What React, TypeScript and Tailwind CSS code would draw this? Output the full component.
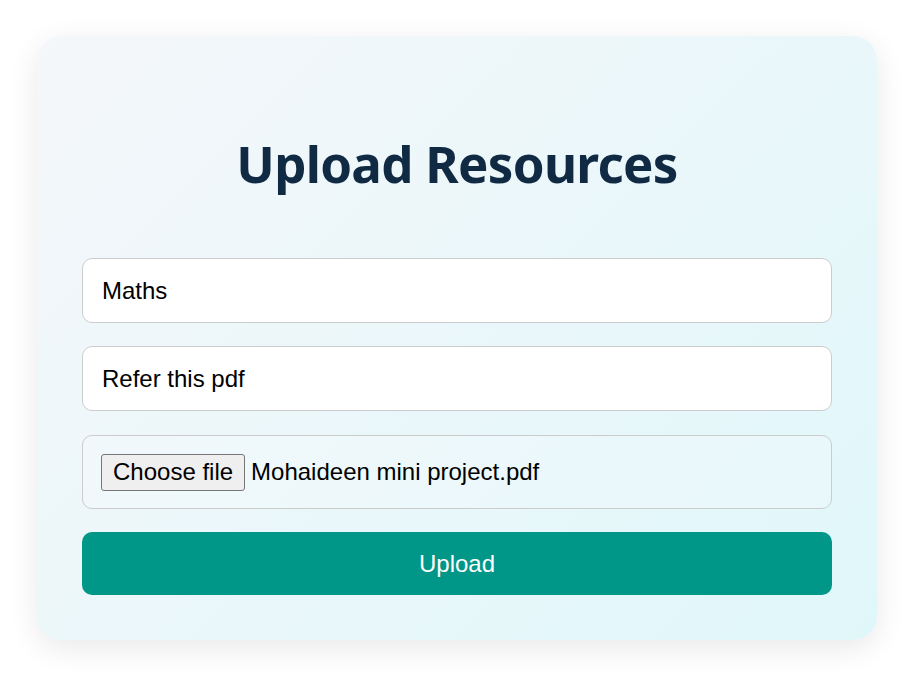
import React from "react";

export default function App() {
  return (
    <div className="w-[901px] h-[679px] bg-white overflow-hidden pt-[36px] pl-[37px]">
      <div
        className="w-[840px] h-[604px] rounded-[24px] px-[45px] pb-[45px] bg-[linear-gradient(135deg,#f5f7fa_0%,#e0f7fa_100%)] shadow-[0_8px_30px_rgba(0,0,0,0.09)] flex flex-col"
      >
        <h1 className="mt-[95px] mb-[63px] text-center text-[51px] tracking-[-0.7px] leading-[64px] font-bold text-[#102a43] font-['Noto_Sans',sans-serif]">
          Upload Resources
        </h1>
        <div className="flex flex-col font-['Liberation_Sans',Arial,sans-serif] text-[24px] text-black">
          <input
            readOnly
            defaultValue="Maths"
            className="h-[65px] w-full rounded-[10px] border border-[#cccccc] bg-white px-[19px] text-[24px] text-black outline-none"
          />
          <input
            readOnly
            defaultValue="Refer this pdf"
            className="mt-[23px] h-[65px] w-full rounded-[10px] border border-[#cccccc] bg-white px-[19px] text-[24px] text-black outline-none"
          />
          <div className="mt-[24px] h-[74px] w-full rounded-[10px] border border-[#cccccc] bg-white/20 px-[18px] flex items-center">
            <button className="h-[37px] px-[11px] rounded-[3px] border border-[#767676] bg-[#efefef] text-[24px] leading-none text-black">
              Choose file
            </button>
            <span className="ml-[6px] leading-none">Mohaideen mini project.pdf</span>
          </div>
          <button className="mt-[23px] h-[63px] w-full rounded-[10px] bg-[#009688] text-white text-[24px]">
            Upload
          </button>
        </div>
      </div>
    </div>
  );
}
